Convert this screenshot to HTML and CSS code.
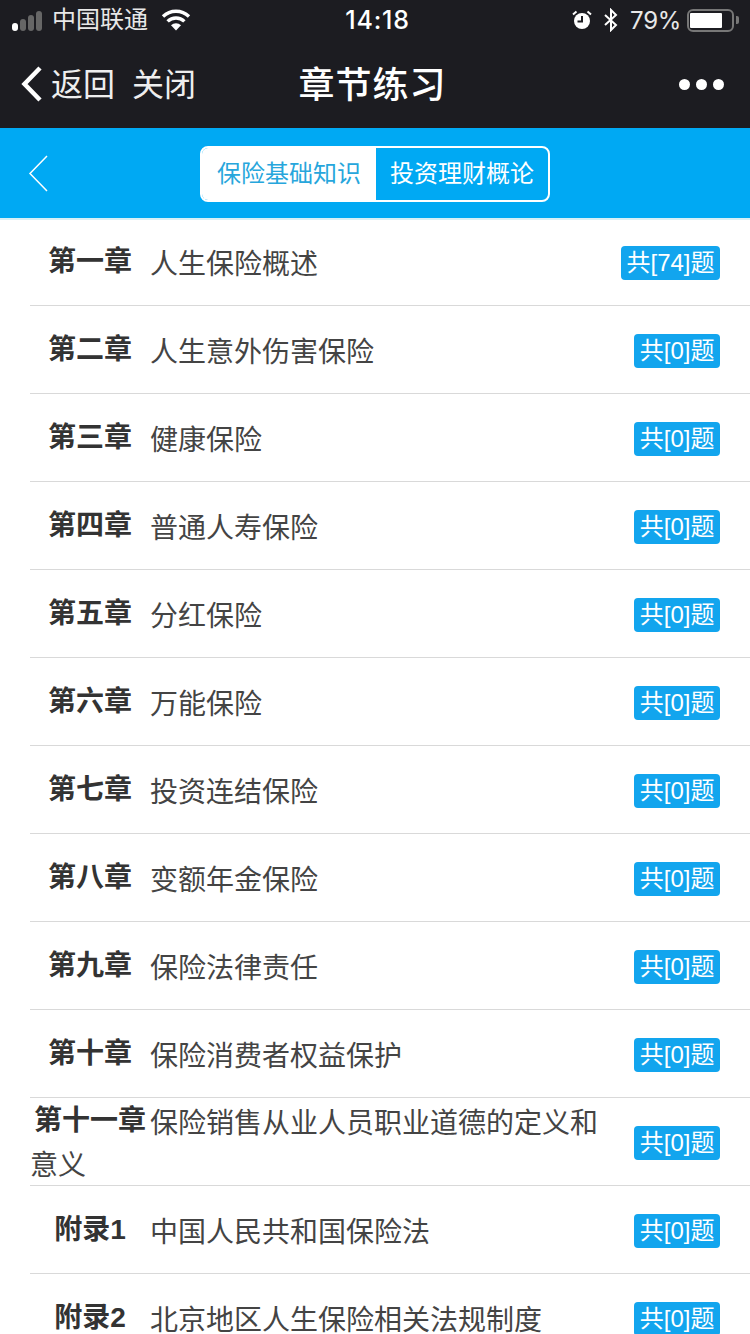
FILE: index.html
```html
<!DOCTYPE html>
<html lang="zh-CN">
<head>
    <meta charset="UTF-8">
    <meta name="viewport" content="width=device-width, initial-scale=1.0">
    <title>章节练习</title>
    <link rel="stylesheet" href="styles.css">
</head>
<body>
    <div class="status-bar">
        <div class="status-left">
            <span class="signal">
                <i class="on"></i><i></i><i></i><i></i>
            </span>
            <span class="carrier">中国联通</span>
            <svg class="wifi" width="30" height="22" viewBox="0 0 30 22">
                <path d="M15 21.5 L10 16.2 A7.4 7.4 0 0 1 20 16.2 Z" fill="#fff"/>
                <path d="M6.6 12.4 A12 12 0 0 1 23.4 12.4" fill="none" stroke="#fff" stroke-width="3.4"/>
                <path d="M2 7.4 A19 19 0 0 1 28 7.4" fill="none" stroke="#fff" stroke-width="3.4"/>
            </svg>
        </div>
        <div class="status-time">14:18</div>
        <div class="status-right">
            <svg class="alarm" width="20" height="20" viewBox="0 0 20 20">
                <circle cx="10" cy="11" r="8" fill="#fff"/>
                <path d="M10 6 V11.5 H5.5" fill="none" stroke="#1c1c21" stroke-width="2"/>
                <path d="M1 4.5 L4.5 1.5 M19 4.5 L15.5 1.5" stroke="#fff" stroke-width="2"/>
            </svg>
            <svg class="bluetooth" width="16" height="24" viewBox="0 0 16 24">
                <path d="M2 7 L13 17 L8 22 V2 L13 7 L2 17" fill="none" stroke="#fff" stroke-width="2"/>
            </svg>
            <span class="battery-pct">79%</span>
            <span class="battery"><i></i></span>
            <span class="battery-tip"></span>
        </div>
    </div>

    <nav class="nav-bar">
        <div class="nav-left">
            <svg class="nav-back" width="22" height="36" viewBox="0 0 22 36">
                <path d="M19 2 L3.5 18 L19 34" fill="none" stroke="#fff" stroke-width="4.5"/>
            </svg>
            <a class="nav-link">返回</a>
            <a class="nav-link">关闭</a>
        </div>
        <h1>章节练习</h1>
        <div class="nav-more"><i></i><i></i><i></i></div>
    </nav>

    <div class="tab-bar">
        <svg class="tab-back" width="20" height="37" viewBox="0 0 20 37">
            <path d="M19 1 L2 18.5 L19 36" fill="none" stroke="#fff" stroke-width="1.5"/>
        </svg>
        <div class="tabs">
            <div class="tab active">保险基础知识</div>
            <div class="tab">投资理财概论</div>
        </div>
    </div>

    <ul class="chapters">
        <li><p><b>第一章</b>人生保险概述</p><span class="count">共[74]题</span></li>
        <li><p><b>第二章</b>人生意外伤害保险</p><span class="count">共[0]题</span></li>
        <li><p><b>第三章</b>健康保险</p><span class="count">共[0]题</span></li>
        <li><p><b>第四章</b>普通人寿保险</p><span class="count">共[0]题</span></li>
        <li><p><b>第五章</b>分红保险</p><span class="count">共[0]题</span></li>
        <li><p><b>第六章</b>万能保险</p><span class="count">共[0]题</span></li>
        <li><p><b>第七章</b>投资连结保险</p><span class="count">共[0]题</span></li>
        <li><p><b>第八章</b>变额年金保险</p><span class="count">共[0]题</span></li>
        <li><p><b>第九章</b>保险法律责任</p><span class="count">共[0]题</span></li>
        <li><p><b>第十章</b>保险消费者权益保护</p><span class="count">共[0]题</span></li>
        <li><p><b>第十一章</b>保险销售从业人员职业道德的定义和意义</p><span class="count">共[0]题</span></li>
        <li><p><b>附录1</b>中国人民共和国保险法</p><span class="count">共[0]题</span></li>
        <li><p><b>附录2</b>北京地区人生保险相关法规制度</p><span class="count">共[0]题</span></li>
    </ul>
</body>
</html>
```

FILE: styles.css
```css
html,
body {
    height: 1334px;
    overflow: hidden;
}

body {
    margin: 0;
    background-color: #fff;
    font-family: "Liberation Sans", "Noto Sans CJK SC", sans-serif;
    color: #444;
}

/* status bar */
.status-bar {
    display: grid;
    grid-template-columns: 1fr auto 1fr;
    align-items: center;
    height: 40px;
    padding: 0 11px 0 12px;
    background-color: #1c1c21;
    color: #e8e8e8;
}

.status-left,
.status-right {
    display: flex;
    align-items: center;
}

.status-right {
    justify-content: flex-end;
}

.signal {
    display: flex;
    align-items: flex-end;
    gap: 2px;
    height: 22px;
}

.signal i {
    width: 6px;
    height: 20px;
    border-radius: 3px;
    background-color: #666;
}

.signal i:nth-child(1) {
    height: 8px;
}

.signal i:nth-child(2) {
    height: 12px;
}

.signal i:nth-child(3) {
    height: 16px;
}

.signal i.on {
    background-color: #fff;
}

.carrier {
    margin-left: 10px;
    font-size: 24px;
    line-height: 40px;
}

.wifi {
    margin-left: 13px;
}

.status-time {
    margin-left: 4px;
    font-family: Inter, sans-serif;
    font-size: 25px;
    font-weight: 500;
    letter-spacing: 0.8px;
    color: #fff;
}

.alarm {
    margin-right: 11px;
}

.bluetooth {
    margin-right: 11px;
}

.battery-pct {
    font-family: Inter, sans-serif;
    font-size: 24px;
    letter-spacing: -0.3px;
    margin-right: 6px;
}

.battery {
    box-sizing: border-box;
    width: 47px;
    height: 23px;
    padding: 2px 1px;
    border: 2px solid #777;
    border-radius: 6px;
}

.battery i {
    display: block;
    width: 32px;
    height: 100%;
    border-radius: 1px;
    background-color: #fff;
}

.battery-tip {
    width: 3px;
    height: 8px;
    margin-left: 2px;
    border-radius: 0 2px 2px 0;
    background-color: #777;
}

/* nav bar */
.nav-bar {
    display: grid;
    grid-template-columns: 1fr auto 1fr;
    align-items: center;
    height: 88px;
    padding: 0 26px 0 21px;
    background-color: #1c1c21;
    color: #fff;
}

.nav-left {
    display: flex;
    align-items: center;
}

.nav-back {
    margin-right: 8px;
}

.nav-link {
    padding-bottom: 4px;
    font-size: 32px;
    color: #eee;
    margin-right: 17px;
}

.nav-bar h1 {
    margin: 0;
    padding-bottom: 4px;
    font-size: 36px;
    font-weight: 500;
    letter-spacing: 1px;
}

.nav-more {
    display: flex;
    justify-content: flex-end;
    gap: 6px;
}

.nav-more i {
    width: 11px;
    height: 11px;
    border-radius: 50%;
    background-color: #fff;
}

/* subject tabs */
.tab-bar {
    display: flex;
    justify-content: center;
    align-items: center;
    position: relative;
    box-sizing: border-box;
    height: 90px;
    padding-top: 2px;
    box-shadow: 0 2px 0 #d8f0f6;
    background-color: #00a9f3;
}

.tab-back {
    position: absolute;
    left: 28px;
    top: 27px;
}

.tabs {
    display: flex;
    box-sizing: border-box;
    width: 350px;
    height: 56px;
    border: 2px solid #fff;
    border-radius: 8px;
    overflow: hidden;
}

.tab {
    flex: 1;
    font-size: 24px;
    line-height: 52px;
    text-align: center;
    color: #fff;
}

.tab.active {
    flex: 0 0 174px;
    background-color: #fff;
    color: #27a6dc;
}

/* chapter list */
.chapters {
    margin: 0;
    padding: 0 0 0 30px;
    list-style: none;
}

.chapters li {
    display: flex;
    justify-content: space-between;
    align-items: center;
    box-sizing: border-box;
    height: 88px;
    padding: 2px 30px 0 0;
    border-bottom: 1px solid #d9d9d9;
}

.chapters p {
    width: 570px;
    margin: 0;
    padding-top: 4px;
    font-size: 28px;
    line-height: 42px;
}

.chapters b {
    display: inline-block;
    width: 120px;
    text-align: center;
    color: #333;
    position: relative;
    top: -3px;
}

.count {
    flex: none;
    height: 34px;
    padding: 0 5.5px;
    border-radius: 4px;
    background-color: #12a5ee;
    color: #fff;
    font-size: 24px;
    line-height: 34px;
}
```
